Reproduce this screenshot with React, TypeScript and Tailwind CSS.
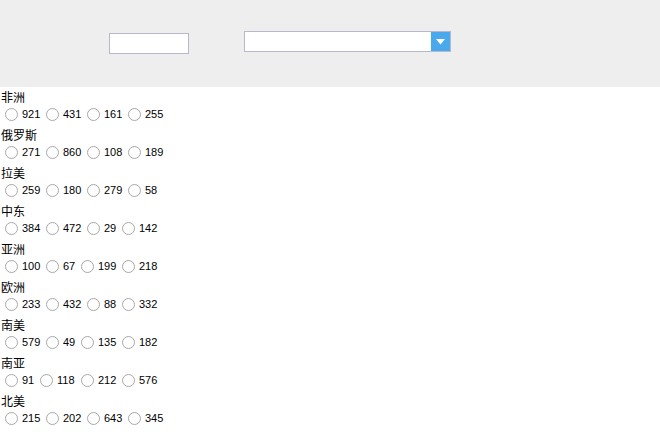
import React from "react";

const groups: { name: string; values: number[] }[] = [
  { name: "非洲", values: [921, 431, 161, 255] },
  { name: "俄罗斯", values: [271, 860, 108, 189] },
  { name: "拉美", values: [259, 180, 279, 58] },
  { name: "中东", values: [384, 472, 29, 142] },
  { name: "亚洲", values: [100, 67, 199, 218] },
  { name: "欧洲", values: [233, 432, 88, 332] },
  { name: "南美", values: [579, 49, 135, 182] },
  { name: "南亚", values: [91, 118, 212, 576] },
  { name: "北美", values: [215, 202, 643, 345] },
];

export default function App() {
  return (
    <div className="w-[660px] h-[434px] bg-white overflow-hidden text-black" style={{ fontFamily: '"Noto Sans CJK SC", sans-serif' }}>
      <div className="h-[87px] bg-[#eeeeee] flex items-start">
        <div className="ml-[109px] mt-[33px] w-[80px] h-[21px] bg-white border border-[#b8b8cc]" />
        <div className="ml-[55px] mt-[31px] w-[207px] h-[21px] bg-white border border-[#b8b8cc] flex justify-end">
          <div className="w-[19px] h-full bg-[#49a9ec] flex items-center justify-center">
            <svg width="9" height="6" viewBox="0 0 9 6">
              <polygon points="0,0 9,0 4.5,5.5" fill="#ffffff" />
            </svg>
          </div>
        </div>
      </div>
      <div>
        {groups.map((g) => (
          <div key={g.name}>
            <div className="h-[19px] text-[12px] leading-[19px] pl-[1px]">{g.name}</div>
            <div className="h-[19px] flex items-start pt-[2px] pl-[5px] gap-[6px]">
              {g.values.map((v, i) => (
                <div key={i} className="flex items-center">
                  <span className="w-[13px] h-[13px] rounded-full border border-[#a8a8a8] bg-white mr-[4px] shrink-0" />
                  <span
                    className="text-[11px] leading-[13px] whitespace-nowrap"
                    style={{ fontFamily: '"Liberation Sans", sans-serif', width: String(v).length * 6 }}
                  >
                    {v}
                  </span>
                </div>
              ))}
            </div>
          </div>
        ))}
      </div>
    </div>
  );
}
